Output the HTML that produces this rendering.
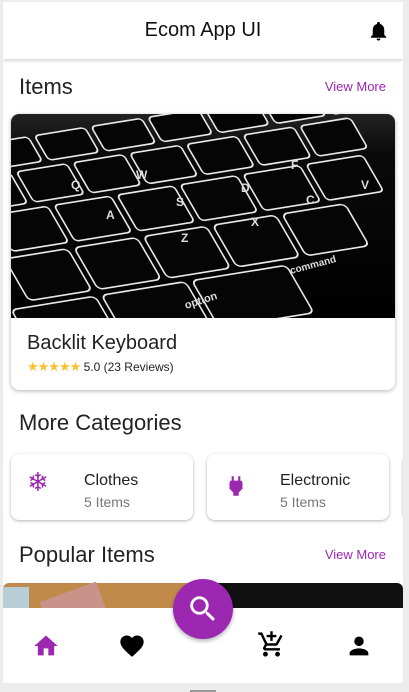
<!DOCTYPE html>
<html><head><style>
*{margin:0;padding:0;box-sizing:border-box}
body{width:409px;height:692px;background:#ececec;font-family:"Liberation Sans",Roboto,sans-serif;position:relative;overflow:hidden}
.page{position:absolute;left:3px;top:2px;width:400px;height:681px;background:#fff;overflow:hidden}
.hdr{position:absolute;left:0;top:0;width:400px;height:57px;background:#fff;box-shadow:0 2px 3px rgba(0,0,0,.15);z-index:2}
.hdr h1{position:absolute;left:0;right:0;top:17px;text-align:center;font-size:20px;font-weight:normal;color:#111}
.sec{position:absolute;left:16px;font-size:22px;color:#222}
.vm{position:absolute;right:17px;font-size:13px;color:#9c27b0}
.card{position:absolute;left:8px;top:112px;width:384px;height:276px;border-radius:8px;background:#fff;box-shadow:0 1px 4px rgba(0,0,0,.3);overflow:hidden}
.cat{position:absolute;top:452px;width:182px;height:66px;border-radius:8px;background:#fff;box-shadow:0 1px 3px rgba(0,0,0,.3)}
.cat .t{position:absolute;left:73px;top:18px;font-size:16px;color:#222}
.cat .s{position:absolute;left:73px;top:40px;font-size:14px;color:#777}
.nav{position:absolute;left:0;top:606px;width:400px;height:75px;background:#fff;z-index:3}
.fab{position:absolute;left:170px;top:577px;width:60px;height:60px;border-radius:50%;background:#9c27b0;box-shadow:0 2px 4px rgba(0,0,0,.3);z-index:4}
</style></head><body>
<div class="page">
<div class="hdr"><h1>Ecom App UI</h1>
<svg style="position:absolute;left:364px;top:17px" width="23" height="24" viewBox="0 0 24 24"><path d="M12 22c1.1 0 2-.9 2-2h-4c0 1.1.9 2 2 2zm6-6v-5c0-3.07-1.63-5.64-4.5-6.32V4c0-.83-.67-1.5-1.5-1.5s-1.5.67-1.5 1.5v.68C7.64 5.36 6 7.92 6 11v5l-2 2v1h16v-1l-2-2z"/></svg></div>
<div class="sec" style="top:72px">Items</div><div class="vm" style="top:77px">View More</div>
<div class="card">
<svg width="384" height="204" viewBox="0 0 384 204" style="display:block">
<defs><linearGradient id="g" x1="0" y1="0" x2="0" y2="1"><stop offset="0" stop-color="#222"/><stop offset=".2" stop-color="#0a0a0a"/><stop offset="1" stop-color="#000"/></linearGradient></defs>
<rect width="384" height="204" fill="url(#g)"/>
<g transform="matrix(1.05,-0.17,0.55,0.95,-90,40)" fill="#050505" stroke="#e8e8e8" stroke-width="1.6">
<rect x="0" y="0" width="48" height="26" rx="4"/><rect x="54" y="0" width="48" height="26" rx="4"/><rect x="108" y="0" width="48" height="26" rx="4"/><rect x="162" y="0" width="48" height="26" rx="4"/><rect x="216" y="0" width="48" height="26" rx="4"/><rect x="270" y="0" width="48" height="26" rx="4"/><rect x="324" y="0" width="48" height="26" rx="4"/><rect x="378" y="0" width="48" height="26" rx="4"/>
<rect x="20" y="32" width="48" height="32" rx="4"/><rect x="74" y="32" width="48" height="32" rx="4"/><rect x="128" y="32" width="48" height="32" rx="4"/><rect x="182" y="32" width="48" height="32" rx="4"/><rect x="236" y="32" width="48" height="32" rx="4"/><rect x="290" y="32" width="48" height="32" rx="4"/><rect x="344" y="32" width="48" height="32" rx="4"/>
<rect x="30" y="70" width="54" height="38" rx="4"/><rect x="90" y="70" width="54" height="38" rx="4"/><rect x="150" y="70" width="54" height="38" rx="4"/><rect x="210" y="70" width="54" height="38" rx="4"/><rect x="270" y="70" width="54" height="38" rx="4"/><rect x="330" y="70" width="54" height="38" rx="4"/>
<rect x="20" y="114" width="60" height="44" rx="5"/><rect x="86" y="114" width="60" height="44" rx="5"/><rect x="152" y="114" width="60" height="44" rx="5"/><rect x="218" y="114" width="60" height="44" rx="5"/><rect x="284" y="114" width="60" height="44" rx="5"/>
<rect x="0" y="164" width="80" height="50" rx="5"/><rect x="86" y="164" width="80" height="50" rx="5"/><rect x="172" y="164" width="90" height="50" rx="5"/>
</g>
<g fill="#ddd" font-size="12" font-family="Liberation Sans" font-weight="bold">
<text x="60" y="75">Q</text><text x="125" y="65">W</text><text x="95" y="105">A</text><text x="165" y="92">S</text><text x="170" y="128">Z</text><text x="240" y="112">X</text><text x="230" y="78">D</text><text x="295" y="90">C</text><text x="350" y="75">V</text><text x="280" y="55">F</text>
<text x="280" y="160" font-size="10" transform="rotate(-15 280 160)">command</text><text x="175" y="195" font-size="11" transform="rotate(-18 175 195)">option</text></g>
</svg>
<div style="position:absolute;left:16px;top:218px;font-size:20px;color:#222">Backlit Keyboard</div>
<div style="position:absolute;left:16px;top:245px;font-size:12px;color:#222"><span style="color:#fbc02d;font-size:13px;letter-spacing:-1px">★★★★★</span> 5.0 (23 Reviews)</div>
</div>
<div class="sec" style="top:408px">More Categories</div>
<div class="cat" style="left:8px"><span style="position:absolute;left:16px;top:13px;font-size:26px;color:#9c27b0">❄</span><div class="t">Clothes</div><div class="s">5 Items</div></div>
<div class="cat" style="left:204px"><svg style="position:absolute;left:16px;top:19px" width="26" height="26" viewBox="0 0 24 24"><path fill="#9c27b0" d="M16 7V3h-2v4h-4V3H8v4C7 7 6 8 6 9v5.5L9.5 18v3h5v-3l3.5-3.5V9c0-1-1-2-2-2z"/></svg><div class="t">Electronic</div><div class="s">5 Items</div></div>
<div class="cat" style="left:400px"></div>
<div class="sec" style="top:540px">Popular Items</div><div class="vm" style="top:545px">View More</div>
<div style="position:absolute;left:0;top:581px;width:200px;height:30px;background:#c08a4a;border-radius:6px 0 0 0"><div style="position:absolute;left:0;top:4px;width:26px;height:26px;background:#b8cdd6"></div><div style="position:absolute;left:40px;top:8px;width:60px;height:30px;background:#c9938a;transform:rotate(-20deg)"></div></div>
<div style="position:absolute;left:200px;top:581px;width:200px;height:30px;background:#111;border-radius:0 6px 0 0"></div>
<div class="nav">
<svg style="position:absolute;left:29px;top:24px" width="28" height="28" viewBox="0 0 24 24"><path fill="#9c27b0" d="M10 20v-6h4v6h5v-8h3L12 3 2 12h3v8z"/></svg>
<svg style="position:absolute;left:115px;top:24px" width="28" height="28" viewBox="0 0 24 24"><path d="M12 21.35l-1.45-1.32C5.4 15.36 2 12.28 2 8.5 2 5.42 4.42 3 7.5 3c1.74 0 3.41.81 4.5 2.09C13.09 3.81 14.76 3 16.5 3 19.58 3 22 5.42 22 8.5c0 3.78-3.4 6.86-8.55 11.54z"/></svg>
<svg style="position:absolute;left:254px;top:22px" width="29" height="29" viewBox="0 0 24 24"><path d="M11 9h2V6h3V4h-3V1h-2v3H8v2h3v3zm-4 9c-1.1 0-2 .9-2 2s.9 2 2 2 2-.9 2-2-.9-2-2-2zm10 0c-1.1 0-2 .9-2 2s.9 2 2 2 2-.9 2-2-.9-2-2-2zm-9.83-3.25l.03-.12.9-1.63h7.45c.75 0 1.41-.41 1.750-1.03l3.86-7.01L19.42 4l-3.87 7H8.53L4.27 2H1v2h2l3.6 7.59-1.35 2.45C4.52 15.37 5.48 17 7 17h12v-2H7.42c-.13 0-.25-.11-.25-.25z"/></svg>
<svg style="position:absolute;left:342px;top:24px" width="28" height="28" viewBox="0 0 24 24"><path d="M12 12c2.21 0 4-1.790 4-4s-1.79-4-4-4-4 1.79-4 4 1.79 4 4 4zm0 2c-2.67 0-8 1.34-8 4v2h16v-2c0-2.66-5.33-4-8-4z"/></svg>
</div>
<div class="fab"><svg style="position:absolute;left:13px;top:13px" width="34" height="34" viewBox="0 0 24 24"><path fill="#fff" d="M15.5 14h-.79l-.28-.27A6.47 6.47 0 0016 9.5 6.5 6.5 0 109.5 16c1.61 0 3.09-.59 4.23-1.57l.27.28v.79l5 4.99L20.49 19l-4.99-5zm-6 0C7.01 14 5 11.990 5 9.5S7.01 5 9.5 5 14 7.01 14 9.5 11.99 14 9.5 14z"/></svg></div>
</div>
<div style="position:absolute;left:190px;top:690px;width:26px;height:2px;background:#999"></div>
</body></html>
